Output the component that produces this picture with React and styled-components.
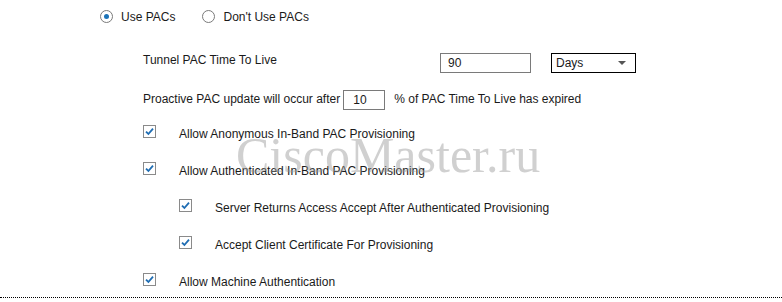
import React from 'react';
import styled, { createGlobalStyle } from 'styled-components';

const GlobalStyle = createGlobalStyle`
    html, body {
        margin: 0;
        padding: 0;
        background: #ffffff;
    }
    body {
        font-family: "Liberation Sans", Arial, sans-serif;
        font-size: 12px;
        color: #1a1a1a;
    }
`;

const Page = styled.div`
    position: relative;
    width: 782px;
    height: 302px;
    overflow: hidden;
`;

const RadioRow = styled.div`
    display: flex;
    align-items: center;
    height: 32px;
    padding-left: 100px;
    padding-top: 1px;
    box-sizing: border-box;
`;

const RadioOption = styled.label`
    display: flex;
    align-items: center;
    gap: 8px;
    margin-right: 27px;
    line-height: 14px;
`;

const RadioDot = styled.span`
    width: 11px;
    height: 11px;
    border: 1px solid #7a7a7a;
    border-radius: 50%;
    display: flex;
    align-items: center;
    justify-content: center;
    background: #fff;

    &::after {
        content: '';
        width: 5px;
        height: 5px;
        border-radius: 50%;
        background: ${p => (p.$checked ? '#1c73b8' : 'transparent')};
    }
`;

const Section = styled.div`
    padding-left: 143px;
`;

const TtlRow = styled.div`
    display: flex;
    align-items: flex-start;
    height: 22px;
    margin-top: 20px;
`;

const Label = styled.span`
    width: 297px;
    line-height: 14px;
    margin-top: 1px;
`;

const TextBox = styled.div`
    width: ${p => p.$width}px;
    height: 20px;
    border: 1px solid #7a7a7a;
    padding-left: ${p => p.$pad || 7}px;
    margin-top: 1px;
    display: flex;
    align-items: center;
    line-height: 14px;
    box-sizing: border-box;
`;

const Select = styled.div`
    width: 85px;
    height: 20px;
    margin-left: 20px;
    margin-top: 1px;
    border: 1px solid #000;
    box-sizing: border-box;
    display: flex;
    align-items: center;
    justify-content: space-between;
    padding: 0 9px 0 4px;
    line-height: 14px;
`;

const Caret = styled.span`
    width: 0;
    height: 0;
    border-left: 4px solid transparent;
    border-right: 4px solid transparent;
    border-top: 4px solid #555;
`;

const ProactiveRow = styled.div`
    display: flex;
    align-items: center;
    height: 22px;
    margin-top: 14px;
`;

const Inline = styled.span`
    line-height: 14px;
    margin-right: ${p => p.$mr || 0}px;
    margin-left: ${p => p.$ml || 0}px;
`;

const CheckList = styled.div`
    margin-top: 15px;
`;

const CheckRow = styled.div`
    display: flex;
    align-items: flex-start;
    height: ${p => (p.$last ? 24 : 37)}px;
    padding-left: ${p => (p.$indent ? 36 : 0)}px;
`;

const CheckBox = styled.span`
    width: 11px;
    height: 11px;
    border: 1px solid #8a8a8a;
    background: #fff;
    display: flex;
    align-items: center;
    justify-content: center;
    margin-right: 23px;
`;

const CheckText = styled.span`
    line-height: 14px;
    margin-top: 2px;
`;

const Divider = styled.div`
    border-top: 1px dotted #000;
    width: 100%;
`;

const Watermark = styled.div`
    position: absolute;
    left: 236px;
    top: 127px;
    font-family: "Liberation Serif", "Times New Roman", serif;
    font-size: 50px;
    line-height: 56px;
    color: rgba(150, 150, 150, 0.45);
    pointer-events: none;
    white-space: nowrap;
`;

const Tick = () => (
    <svg width="9" height="9" viewBox="0 0 9 9">
        <path d="M1 4.6 L3.4 7 L8 1.6" fill="none" stroke="#1f6db3" strokeWidth="1.8" />
    </svg>
);

const Check = ({ indent, last, children }) => (
    <CheckRow $indent={indent} $last={last}>
        <CheckBox><Tick /></CheckBox>
        <CheckText>{children}</CheckText>
    </CheckRow>
);

const App = () => {
    return (
        <>
            <GlobalStyle />
            <Page>
                <RadioRow>
                    <RadioOption><RadioDot $checked />Use PACs</RadioOption>
                    <RadioOption><RadioDot />Don't Use PACs</RadioOption>
                </RadioRow>
                <Section>
                    <TtlRow>
                        <Label>Tunnel PAC Time To Live</Label>
                        <TextBox $width={91}>90</TextBox>
                        <Select>Days<Caret /></Select>
                    </TtlRow>
                    <ProactiveRow>
                        <Inline $mr={3}>Proactive PAC update will occur after</Inline>
                        <TextBox $width={42} $pad={9}>10</TextBox>
                        <Inline $ml={9}>% of PAC Time To Live has expired</Inline>
                    </ProactiveRow>
                    <CheckList>
                        <Check>Allow Anonymous In-Band PAC Provisioning</Check>
                        <Check>Allow Authenticated In-Band PAC Provisioning</Check>
                        <Check indent>Server Returns Access Accept After Authenticated Provisioning</Check>
                        <Check indent>Accept Client Certificate For Provisioning</Check>
                        <Check last>Allow Machine Authentication</Check>
                    </CheckList>
                </Section>
                <Divider />
                <Watermark>CiscoMaster.ru</Watermark>
            </Page>
        </>
    );
};

export default App;
